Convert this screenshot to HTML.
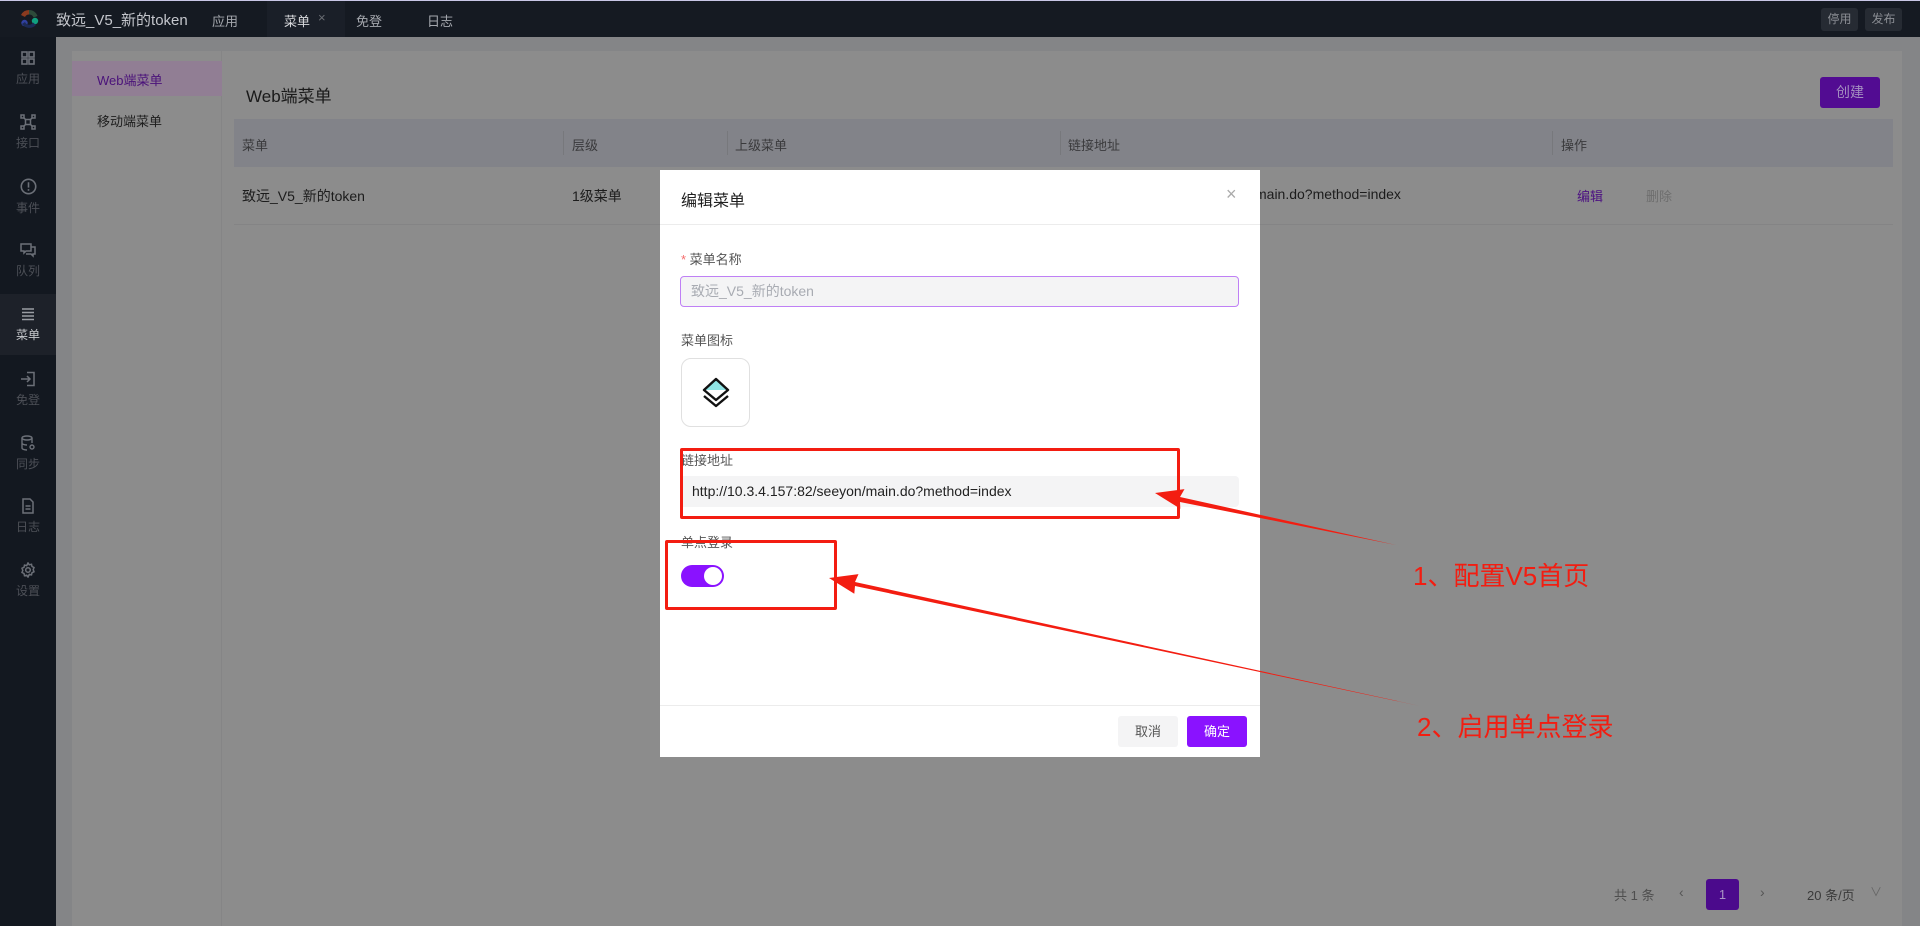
<!DOCTYPE html>
<html><head><meta charset="utf-8"><style>
*{margin:0;padding:0;box-sizing:border-box}
body{width:1920px;height:926px;overflow:hidden;background:#848587;font-family:"Liberation Sans","Noto Sans CJK SC",sans-serif;position:relative}
.a{position:absolute;white-space:nowrap}
#top{position:absolute;left:0;top:0;width:1920px;height:37px;background:#151a22;border-top:1px solid #c9c7e6}
#side{position:absolute;left:0;top:37px;width:56px;height:889px;background:#131820}
.si{position:absolute;left:0;width:56px;text-align:center;color:#4d5057;font-size:12px}
.si svg{display:block;margin:0 auto}
.card{position:absolute;left:72px;top:51px;width:1830px;height:875px;background:#8c8c8c}
.th{color:#3a3a3c;font-size:13px}
</style></head><body>
<div id="top">
  <svg class="a" style="left:18px;top:7px" width="22" height="22" viewBox="0 0 22 22"><path d="M11 2a9 9 0 0 0-8 5l4 2a4.5 4.5 0 0 1 4-2.5z" fill="#8a3a1f"/><path d="M11 2a9 9 0 0 1 8.5 6l-4 1.5A4.5 4.5 0 0 0 11 6.5z" fill="#2d4a3a"/><circle cx="17" cy="13" r="3.2" fill="#10a080"/><circle cx="6.5" cy="15" r="3.2" fill="#3040a0"/><path d="M4 16a9 9 0 0 0 14 1l-3-2.5a4.5 4.5 0 0 1-8-.5z" fill="#1c2a55"/></svg>
  <div class="a" style="left:56px;top:8px;color:#c4c6cc;font-size:15px">致远_V5_新的token</div>
  <div class="a" style="left:212px;top:10px;color:#a5a8ae;font-size:13px">应用</div>
  <div class="a" style="left:267px;top:0;width:78px;height:36px;background:#1a1f28"></div>
  <div class="a" style="left:284px;top:10px;color:#d8d9dc;font-size:13px">菜单</div>
  <div class="a" style="left:318px;top:9px;color:#6a6d73;font-size:13px">×</div>
  <div class="a" style="left:356px;top:10px;color:#a5a8ae;font-size:13px">免登</div>
  <div class="a" style="left:427px;top:10px;color:#a5a8ae;font-size:13px">日志</div>
  <div class="a" style="left:1821px;top:7px;width:37px;height:23px;background:#262b33;border-radius:3px;color:#8b8e94;font-size:12px;text-align:center;line-height:23px">停用</div>
  <div class="a" style="left:1865px;top:7px;width:37px;height:23px;background:#262b33;border-radius:3px;color:#8b8e94;font-size:12px;text-align:center;line-height:23px">发布</div>
</div>
<div id="side">
  <div class="si" style="top:13px"><svg width="16" height="16" viewBox="0 0 16 16" fill="none" stroke="#6c7078" stroke-width="1.6"><rect x="2" y="2" width="5" height="5"/><rect x="9" y="2" width="5" height="5"/><rect x="2" y="9" width="5" height="5"/><rect x="9" y="9" width="5" height="5"/></svg><div style="margin-top:4px">应用</div></div>
  <div class="si" style="top:77px"><svg width="16" height="16" viewBox="0 0 16 16" fill="none" stroke="#6c7078" stroke-width="1.5"><rect x="5.5" y="5.5" width="5" height="5"/><rect x="1" y="1" width="3" height="3"/><rect x="12" y="1" width="3" height="3"/><rect x="1" y="12" width="3" height="3"/><rect x="12" y="12" width="3" height="3"/><path d="M4 4l2 2M12 4l-2 2M4 12l2-2M12 12l-2-2"/></svg><div style="margin-top:4px">接口</div></div>
  <div class="si" style="top:141px"><svg width="17" height="17" viewBox="0 0 16 16" fill="none" stroke="#6c7078" stroke-width="1.5"><circle cx="8" cy="8" r="6.8"/><path d="M8 4v5M8 10.5v1.5"/></svg><div style="margin-top:4px">事件</div></div>
  <div class="si" style="top:205px"><svg width="16" height="16" viewBox="0 0 16 16" fill="none" stroke="#6c7078" stroke-width="1.5"><path d="M1 2h10v7H6l-2 2V9H1z"/><path d="M11 5h4v7h-2v2l-2-2H6"/></svg><div style="margin-top:4px">队列</div></div>
  <div class="a" style="left:0;top:257px;width:56px;height:61px;background:#1d2129"></div>
  <div class="si" style="top:269px;color:#c6c8cc"><svg width="16" height="16" viewBox="0 0 16 16" stroke="#9a9da3" stroke-width="1.5"><path d="M2 3h12M2 6.5h12M2 10h12M2 13.5h12"/></svg><div style="margin-top:4px">菜单</div></div>
  <div class="si" style="top:334px"><svg width="16" height="16" viewBox="0 0 16 16" fill="none" stroke="#6c7078" stroke-width="1.5"><path d="M7 1.5h7v13H7M1 8h9M7 5l3 3-3 3"/></svg><div style="margin-top:4px">免登</div></div>
  <div class="si" style="top:398px"><svg width="16" height="16" viewBox="0 0 16 16" fill="none" stroke="#6c7078" stroke-width="1.4"><ellipse cx="7" cy="3" rx="5" ry="2"/><path d="M2 3v10c0 1 2 2 5 2M12 3v5M2 8c0 1 2 2 5 2"/><circle cx="12" cy="12" r="2"/></svg><div style="margin-top:4px">同步</div></div>
  <div class="si" style="top:461px"><svg width="16" height="16" viewBox="0 0 16 16" fill="none" stroke="#6c7078" stroke-width="1.5"><path d="M3 1h7l3 3v11H3zM5.5 8h5M5.5 11h5"/></svg><div style="margin-top:4px">日志</div></div>
  <div class="si" style="top:525px"><svg width="16" height="16" viewBox="0 0 16 16" fill="none" stroke="#6c7078" stroke-width="1.5"><circle cx="8" cy="8" r="2.3"/><path d="M8 1l1.3 1.8 2.2-.5.5 2.2 2 1-.8 2.1.8 2.1-2 1-.5 2.2-2.2-.5L8 15l-1.3-1.8-2.2.5-.5-2.2-2-1 .8-2.1-.8-2.1 2-1 .5-2.2 2.2.5z"/></svg><div style="margin-top:4px">设置</div></div>
</div>
<div class="card"></div>
<div class="a" style="left:72px;top:51px;width:150px;height:875px;border-right:1px solid #858586"></div>
<div class="a" style="left:72px;top:61px;width:150px;height:35px;background:#917e94"></div>
<div class="a" style="left:97px;top:70px;color:#4a127a;font-size:13px">Web端菜单</div>
<div class="a" style="left:97px;top:111px;color:#1e1e1e;font-size:13px">移动端菜单</div>
<div class="a" style="left:246px;top:82px;color:#1a1a1a;font-size:17px">Web端菜单</div>
<div class="a" style="left:1820px;top:77px;width:60px;height:31px;background:#520c92;border-radius:3px;color:#a38ec0;font-size:14px;text-align:center;line-height:31px">创建</div>
<div class="a" style="left:234px;top:119px;width:1659px;height:48px;background:#828389"></div>
<div class="a" style="left:563px;top:131px;width:1px;height:24px;background:#77787c"></div>
<div class="a" style="left:727px;top:131px;width:1px;height:24px;background:#77787c"></div>
<div class="a" style="left:1060px;top:131px;width:1px;height:24px;background:#77787c"></div>
<div class="a" style="left:1552px;top:131px;width:1px;height:24px;background:#77787c"></div>
<div class="a th" style="left:242px;top:135px">菜单</div>
<div class="a th" style="left:572px;top:135px">层级</div>
<div class="a th" style="left:735px;top:135px">上级菜单</div>
<div class="a th" style="left:1068px;top:135px">链接地址</div>
<div class="a th" style="left:1561px;top:135px">操作</div>
<div class="a" style="left:242px;top:186px;font-size:14px;color:#1c1c1c">致远_V5_新的token</div>
<div class="a" style="left:572px;top:186px;font-size:14px;color:#1c1c1c">1级菜单</div>
<div class="a" style="left:1255px;top:186px;font-size:14px;color:#1c1c1c">main.do?method=index</div>
<div class="a" style="left:1577px;top:186px;font-size:13px;color:#4c1182">编辑</div>
<div class="a" style="left:1646px;top:186px;font-size:13px;color:#6e6e6e">删除</div>
<div class="a" style="left:234px;top:224px;width:1659px;height:1px;background:#848485"></div>
<div class="a" style="left:1614px;top:885px;font-size:13px;color:#4e4e4e">共 1 条</div>
<div class="a" style="left:1679px;top:884px;font-size:14px;color:#555">‹</div>
<div class="a" style="left:1706px;top:879px;width:33px;height:31px;background:#4b0a8c;border-radius:3px;color:#a894c4;font-size:13px;text-align:center;line-height:31px">1</div>
<div class="a" style="left:1760px;top:884px;font-size:14px;color:#555">›</div>
<div class="a" style="left:1807px;top:885px;font-size:13px;color:#3a3a3a">20 条/页</div>
<div class="a" style="left:1870px;top:883px;font-size:12px;color:#666">∨</div>

<!-- modal -->
<div class="a" style="left:660px;top:170px;width:600px;height:587px;background:#fff">
  <div class="a" style="left:21px;top:17px;font-size:16px;color:#1f1f1f">编辑菜单</div>
  <div class="a" style="left:566px;top:14px;font-size:18px;color:#aaa">×</div>
  <div class="a" style="left:0;top:54px;width:600px;height:1px;background:#ececec"></div>
  <div class="a" style="left:21px;top:79px;font-size:13px;color:#555"><span style="color:#f56c6c">*</span> 菜单名称</div>
  <div class="a" style="left:20px;top:106px;width:559px;height:31px;background:#f4f4f5;border:1px solid #bf80f5;border-radius:4px;color:#a8abb2;font-size:14px;line-height:29px;padding-left:10px">致远_V5_新的token</div>
  <div class="a" style="left:21px;top:160px;font-size:13px;color:#555">菜单图标</div>
  <div class="a" style="left:21px;top:188px;width:69px;height:69px;border:1px solid #e0e0e0;border-radius:10px"></div>
  <svg class="a" style="left:39px;top:206px" width="34" height="34" viewBox="0 0 34 34"><path d="M17 3L29 14H5z" fill="#8fe4e4"/><path d="M17 3L29 14L17 24L5 14z" fill="none" stroke="#111" stroke-width="2.4" stroke-linejoin="round"/><path d="M5 20L17 30L29 20" fill="none" stroke="#111" stroke-width="2.4" stroke-linejoin="round"/></svg>
  <div class="a" style="left:21px;top:280px;font-size:13px;color:#555">链接地址</div>
  <div class="a" style="left:20px;top:306px;width:559px;height:31px;background:#f4f4f5;border-radius:4px;color:#222;font-size:14px;line-height:31px;padding-left:12px">http://10.3.4.157:82/seeyon/main.do?method=index</div>
  <div class="a" style="left:21px;top:362px;font-size:13px;color:#555">单点登录</div>
  <div class="a" style="left:21px;top:395px;width:43px;height:22px;background:#8a12ff;border-radius:11px"><div style="position:absolute;right:2px;top:2px;width:18px;height:18px;border-radius:50%;background:#fff"></div></div>
  <div class="a" style="left:0;top:535px;width:600px;height:1px;background:#ececec"></div>
  <div class="a" style="left:458px;top:546px;width:60px;height:31px;background:#f4f4f5;border-radius:3px;font-size:13px;color:#555;text-align:center;line-height:31px">取消</div>
  <div class="a" style="left:527px;top:546px;width:60px;height:31px;background:#8a12ff;border-radius:3px;font-size:13px;color:#fff;text-align:center;line-height:31px">确定</div>
</div>

<!-- annotations -->
<div class="a" style="left:680px;top:448px;width:500px;height:71px;border:3px solid #f31d11;border-radius:2px"></div>
<div class="a" style="left:665px;top:540px;width:172px;height:70px;border:3px solid #f31d11;border-radius:2px"></div>
<svg class="a" style="left:0;top:0" width="1920" height="926" viewBox="0 0 1920 926">
  <polygon points="1155,493 1184.5,489.1 1180,497 1396,545 1180,502 1180.3,508.7" fill="#f31d11"/>
  <polygon points="829,578 858.5,574.1 855,582 1420,706 855,586 854.3,593.7" fill="#f31d11"/>
</svg>
<div class="a" style="left:1413px;top:556px;font-size:26px;color:#f31d11">1、配置V5首页</div>
<div class="a" style="left:1417px;top:707px;font-size:26px;color:#f31d11">2、启用单点登录</div>
</body></html>
